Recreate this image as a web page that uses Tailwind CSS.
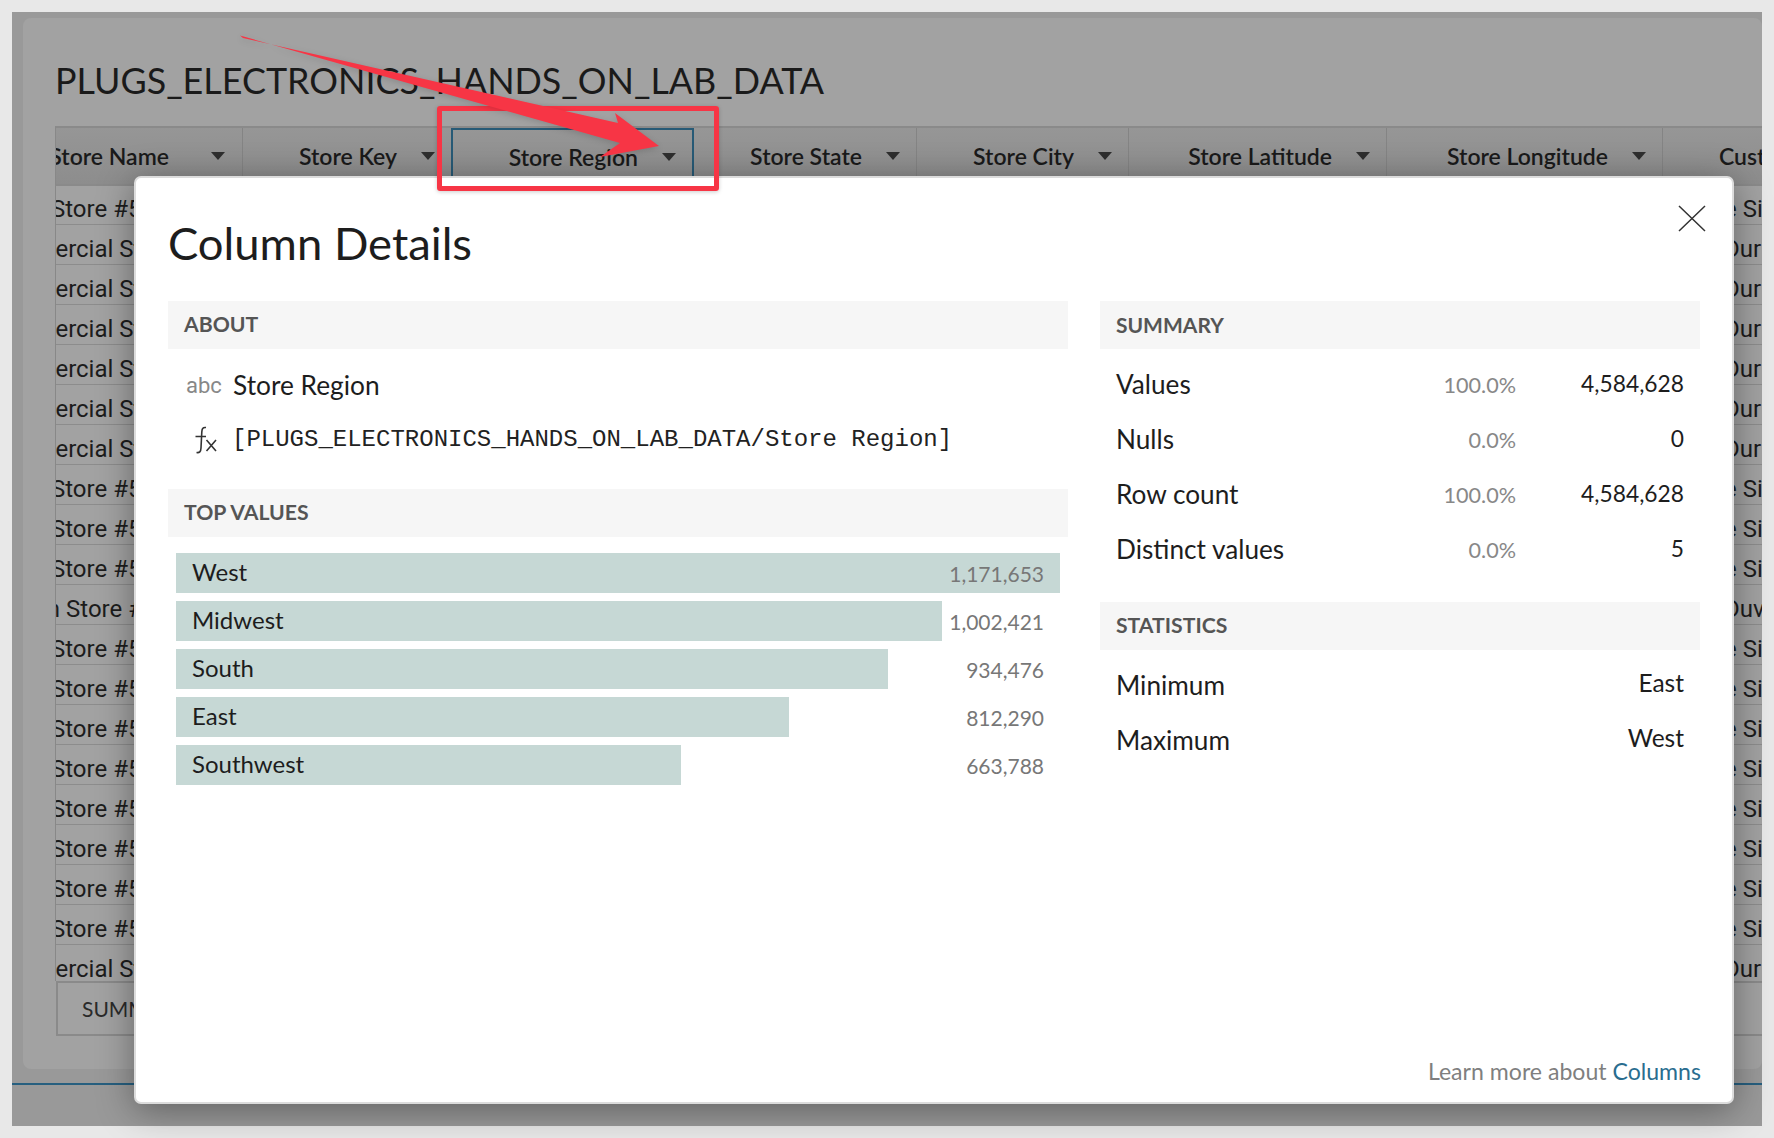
<!doctype html>
<html><head><meta charset="utf-8"><script src="https://cdn.jsdelivr.net/npm/@tailwindcss/browser@4"></script></head>
<body class="bg-[#e8e8e8] w-[1774px] h-[1138px] overflow-hidden font-['Lato',sans-serif] text-[#1d1d1d]">
<div class="relative w-[1774px] h-[1138px] p-[12px]">
  <div class="relative w-[1750px] h-[1114px] bg-[#999999] overflow-hidden">
    <div class="absolute left-[11px] top-[6px] right-0 h-[1051px] bg-[#a2a2a2] rounded-[8px] pl-[32px] pt-[38px] overflow-hidden">
      <h1 class="text-[35.9px] leading-[50px] text-[#1a1a1a] whitespace-nowrap">PLUGS_ELECTRONICS_HANDS_ON_LAB_DATA</h1>
      <div class="mt-[20px] flex h-[60px] bg-gradient-to-b from-[#969696] to-[#8d8d8d] border-y-2 border-[#8a8a8a] border-l border-l-[#888] text-[23px] font-semibold text-[#1a1a1a] whitespace-nowrap">
        <div class="w-[187px] shrink-0 flex items-center justify-end border-r border-[#848484] pr-[17px] overflow-hidden"><span class="mr-[42px]">Store Name</span><span class="border-x-[7px] border-t-[8px] border-x-transparent border-t-[#2e2e2e]"></span></div>
        <div class="w-[208px] shrink-0 flex items-center justify-end pr-[16px]"><span class="mr-[24px]">Store Key</span><span class="border-x-[7px] border-t-[8px] border-x-transparent border-t-[#2e2e2e]"></span></div>
        <div class="w-[243px] shrink-0 flex items-center justify-end border-x-2 border-t-2 border-[#275a76] pr-[16px]"><span class="mr-[24px]">Store Region</span><span class="border-x-[7px] border-t-[8px] border-x-transparent border-t-[#2e2e2e]"></span></div>
        <div class="w-[223px] shrink-0 flex items-center justify-end border-r border-[#848484] pr-[16px]"><span class="mr-[24px]">Store State</span><span class="border-x-[7px] border-t-[8px] border-x-transparent border-t-[#2e2e2e]"></span></div>
        <div class="w-[212px] shrink-0 flex items-center justify-end border-r border-[#848484] pr-[16px]"><span class="mr-[24px]">Store City</span><span class="border-x-[7px] border-t-[8px] border-x-transparent border-t-[#2e2e2e]"></span></div>
        <div class="w-[258px] shrink-0 flex items-center justify-end border-r border-[#848484] pr-[16px]"><span class="mr-[24px]">Store Latitude</span><span class="border-x-[7px] border-t-[8px] border-x-transparent border-t-[#2e2e2e]"></span></div>
        <div class="w-[276px] shrink-0 flex items-center justify-end border-r border-[#848484] pr-[16px]"><span class="mr-[24px]">Store Longitude</span><span class="border-x-[7px] border-t-[8px] border-x-transparent border-t-[#2e2e2e]"></span></div>
        <div class="pl-[56px] flex items-center">Cust</div>
      </div>
      <div class="h-[795px] overflow-hidden border-l border-[#888] font-['Roboto',sans-serif] text-[24px] text-[#1c1c1c] whitespace-nowrap">
        <div class="h-[39px] flex justify-between items-center pt-[8px] border-b border-[#8c8c8c]"><span class="-ml-[5px]">Store #512</span><span class="w-[38px] overflow-hidden">e Si</span></div>
        <div class="h-[40px] flex justify-between items-center pt-[8px] border-b border-[#8c8c8c]"><span class="-ml-[72px]">Commercial Store</span><span class="w-[38px] overflow-hidden">Dur</span></div>
        <div class="h-[40px] flex justify-between items-center pt-[8px] border-b border-[#8c8c8c]"><span class="-ml-[72px]">Commercial Store</span><span class="w-[38px] overflow-hidden">Dur</span></div>
        <div class="h-[40px] flex justify-between items-center pt-[8px] border-b border-[#8c8c8c]"><span class="-ml-[72px]">Commercial Store</span><span class="w-[38px] overflow-hidden">Dur</span></div>
        <div class="h-[40px] flex justify-between items-center pt-[8px] border-b border-[#8c8c8c]"><span class="-ml-[72px]">Commercial Store</span><span class="w-[38px] overflow-hidden">Dur</span></div>
        <div class="h-[40px] flex justify-between items-center pt-[8px] border-b border-[#8c8c8c]"><span class="-ml-[72px]">Commercial Store</span><span class="w-[38px] overflow-hidden">Dur</span></div>
        <div class="h-[40px] flex justify-between items-center pt-[8px] border-b border-[#8c8c8c]"><span class="-ml-[72px]">Commercial Store</span><span class="w-[38px] overflow-hidden">Dur</span></div>
        <div class="h-[40px] flex justify-between items-center pt-[8px] border-b border-[#8c8c8c]"><span class="-ml-[5px]">Store #512</span><span class="w-[38px] overflow-hidden">e Si</span></div>
        <div class="h-[40px] flex justify-between items-center pt-[8px] border-b border-[#8c8c8c]"><span class="-ml-[5px]">Store #512</span><span class="w-[38px] overflow-hidden">e Si</span></div>
        <div class="h-[40px] flex justify-between items-center pt-[8px] border-b border-[#8c8c8c]"><span class="-ml-[5px]">Store #512</span><span class="w-[38px] overflow-hidden">e Si</span></div>
        <div class="h-[40px] flex justify-between items-center pt-[8px] border-b border-[#8c8c8c]"><span class="-ml-[49px]">Main Store #512</span><span class="w-[38px] overflow-hidden">Duv</span></div>
        <div class="h-[40px] flex justify-between items-center pt-[8px] border-b border-[#8c8c8c]"><span class="-ml-[5px]">Store #512</span><span class="w-[38px] overflow-hidden">e Si</span></div>
        <div class="h-[40px] flex justify-between items-center pt-[8px] border-b border-[#8c8c8c]"><span class="-ml-[5px]">Store #512</span><span class="w-[38px] overflow-hidden">e Si</span></div>
        <div class="h-[40px] flex justify-between items-center pt-[8px] border-b border-[#8c8c8c]"><span class="-ml-[5px]">Store #512</span><span class="w-[38px] overflow-hidden">e Si</span></div>
        <div class="h-[40px] flex justify-between items-center pt-[8px] border-b border-[#8c8c8c]"><span class="-ml-[5px]">Store #512</span><span class="w-[38px] overflow-hidden">e Si</span></div>
        <div class="h-[40px] flex justify-between items-center pt-[8px] border-b border-[#8c8c8c]"><span class="-ml-[5px]">Store #512</span><span class="w-[38px] overflow-hidden">e Si</span></div>
        <div class="h-[40px] flex justify-between items-center pt-[8px] border-b border-[#8c8c8c]"><span class="-ml-[5px]">Store #512</span><span class="w-[38px] overflow-hidden">e Si</span></div>
        <div class="h-[40px] flex justify-between items-center pt-[8px] border-b border-[#8c8c8c]"><span class="-ml-[5px]">Store #512</span><span class="w-[38px] overflow-hidden">e Si</span></div>
        <div class="h-[40px] flex justify-between items-center pt-[8px] border-b border-[#8c8c8c]"><span class="-ml-[5px]">Store #512</span><span class="w-[38px] overflow-hidden">e Si</span></div>
        <div class="h-[35px] flex justify-between items-center pt-[13px]"><span class="-ml-[72px]">Commercial Store</span><span class="w-[38px] overflow-hidden">Dur</span></div>
      </div>
      <div class="h-[55px] ml-px border-2 border-r-0 border-[#8a8a8a] flex items-center pl-[24px] text-[21px] text-[#2a2a2a]">SUMMARY</div>
    </div>
    <div class="absolute left-0 right-0 top-[1071px] h-[2px] bg-[#275f7f]"></div>
  </div>

  <div class="absolute left-[134px] top-[176px] w-[1600px] h-[928px] bg-white rounded-[7px] border-2 border-[#dcdcdc] shadow-[0_6px_36px_rgba(0,0,0,0.38)] flex flex-col pl-[32px] pr-[31px]">
    <h2 class="text-[45.4px] leading-[60px] mt-[35px] mb-[28px] text-[#1d1d1d]">Column Details</h2>
    <svg class="absolute right-[26px] top-[27px]" width="28" height="27" viewBox="0 0 28 27" fill="none" stroke="#333" stroke-width="1.5"><path d="M1 1 L27 26 M27 1 L1 26"/></svg>
    <div class="flex gap-[32px]">
      <div class="w-[900px]">
        <div class="h-[48px] bg-[#f6f6f6] flex items-center px-[16px] text-[21.2px] font-bold text-[#555]">ABOUT</div>
        <div class="h-[57px] flex items-center pt-[16px] pl-[18px]"><span class="w-[47px] font-['Roboto',sans-serif] text-[22px] text-[#888]">abc</span><span class="text-[26.3px]">Store Region</span></div>
        <div class="h-[45px] flex items-center pl-[25px] pt-[22px]">
          <svg class="mr-[15px]" width="24" height="28" viewBox="0 0 24 28" fill="none" stroke="#333" stroke-width="1.6"><path d="M13 1.5 C9.5 1 9 3 8.8 6 L8 22 C7.8 26 6.5 27 3.5 26.5 M2.5 10.5 H13 M13.5 14 L23 25 M23 14 L13.5 25"/></svg>
          <span class="font-['Liberation_Mono',monospace] text-[24px] text-[#222] whitespace-nowrap">[PLUGS_ELECTRONICS_HANDS_ON_LAB_DATA/Store Region]</span>
        </div>
        <div class="mt-[38px] h-[48px] bg-[#f6f6f6] flex items-center px-[16px] text-[21.2px] font-bold text-[#555]">TOP VALUES</div>
        <div class="mt-[16px] px-[8px] flex flex-col gap-[8px] text-[24px]">
          <div class="relative h-[40px] flex items-center justify-between px-[16px]"><div class="absolute left-0 top-0 h-full w-[884px] bg-[#c6d8d5]"></div><span class="relative pb-[3px]">West</span><span class="relative text-[21px] text-[#777] pt-[2px]">1,171,653</span></div>
          <div class="relative h-[40px] flex items-center justify-between px-[16px]"><div class="absolute left-0 top-0 h-full w-[766px] bg-[#c6d8d5]"></div><span class="relative pb-[3px]">Midwest</span><span class="relative text-[21px] text-[#777] pt-[2px]">1,002,421</span></div>
          <div class="relative h-[40px] flex items-center justify-between px-[16px]"><div class="absolute left-0 top-0 h-full w-[712px] bg-[#c6d8d5]"></div><span class="relative pb-[3px]">South</span><span class="relative text-[21px] text-[#777] pt-[2px]">934,476</span></div>
          <div class="relative h-[40px] flex items-center justify-between px-[16px]"><div class="absolute left-0 top-0 h-full w-[613px] bg-[#c6d8d5]"></div><span class="relative pb-[3px]">East</span><span class="relative text-[21px] text-[#777] pt-[2px]">812,290</span></div>
          <div class="relative h-[40px] flex items-center justify-between px-[16px]"><div class="absolute left-0 top-0 h-full w-[505px] bg-[#c6d8d5]"></div><span class="relative pb-[3px]">Southwest</span><span class="relative text-[21px] text-[#777] pt-[2px]">663,788</span></div>
        </div>
      </div>
      <div class="w-[600px]">
        <div class="h-[48px] bg-[#f6f6f6] flex items-center px-[16px] text-[21px] font-bold text-[#555]">SUMMARY</div>
        <div class="pt-[8px] pb-[25px] pr-[16px] pl-[16px] text-[26.2px]">
          <div class="h-[55px] flex items-center"><span class="flex-1">Values</span><span class="text-[21.6px] text-[#888] pt-[2px]">100.0%</span><span class="w-[168px] text-right text-[22.8px] pb-[2px]">4,584,628</span></div>
          <div class="h-[55px] flex items-center"><span class="flex-1">Nulls</span><span class="text-[21.6px] text-[#888] pt-[2px]">0.0%</span><span class="w-[168px] text-right text-[22.8px] pb-[2px]">0</span></div>
          <div class="h-[55px] flex items-center"><span class="flex-1">Row count</span><span class="text-[21.6px] text-[#888] pt-[2px]">100.0%</span><span class="w-[168px] text-right text-[22.8px] pb-[2px]">4,584,628</span></div>
          <div class="h-[55px] flex items-center"><span class="flex-1">Distinct values</span><span class="text-[21.6px] text-[#888] pt-[2px]">0.0%</span><span class="w-[168px] text-right text-[22.8px] pb-[2px]">5</span></div>
        </div>
        <div class="h-[48px] bg-[#f6f6f6] flex items-center px-[16px] text-[21.2px] font-bold text-[#555]">STATISTICS</div>
        <div class="pt-[8px] px-[16px] text-[26.2px]">
          <div class="h-[55px] flex items-center"><span class="flex-1">Minimum</span><span class="text-[24.5px] pb-[5px]">East</span></div>
          <div class="h-[55px] flex items-center"><span class="flex-1">Maximum</span><span class="text-[24.5px] pb-[5px]">West</span></div>
        </div>
      </div>
    </div>
    <div class="mt-auto pb-[16px] text-right text-[23.1px] leading-[30px] text-[#7f7f7f]">Learn more about <span class="text-[#2a6d8f]">Columns</span></div>
  </div>

  <div class="absolute left-[437px] top-[106px] w-[282px] h-[85px] border-[5px] border-[#f73545] rounded-[3px] shadow-[0_1px_4px_rgba(0,0,0,0.2)]"></div>
  <svg class="absolute left-0 top-0 drop-shadow-[0_2px_3px_rgba(0,0,0,0.15)]" width="1774" height="300" viewBox="0 0 1774 300"><polygon points="240,35.5 243,38 618,123 615,113 659,146 600,157 620,143" fill="#f73545"/></svg>
</div>
</body></html>
